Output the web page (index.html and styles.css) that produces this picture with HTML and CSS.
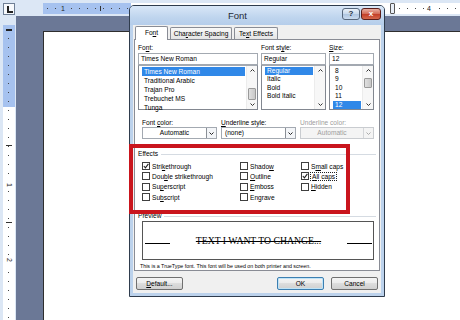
FILE: index.html
```html
<!DOCTYPE html>
<html lang="en">
<head>
    <meta charset="UTF-8">
    <meta name="viewport" content="width=device-width, initial-scale=1.0">
    <title>Font</title>
    <link rel="stylesheet" href="styles.css">
</head>
<body>
    <div class="word">
        <div class="corner"><div class="tab-kind"></div></div>

        <div class="hruler">
            <div class="hstrip">
                <span class="rnum rnum-1">1</span>
                <span class="rtick rtick-1"></span>
                <span class="indent"></span>
                <span class="rnum rnum-4">4</span>
            </div>
        </div>

        <div class="vruler">
            <div class="vstrip">
                <span class="vmark"></span>
                <span class="vtick vtick-1"></span>
                <span class="vnum vnum-1">1</span>
                <span class="vtick vtick-2"></span>
                <span class="vnum vnum-2">2</span>
            </div>
        </div>

        <div class="workspace">
            <div class="page"></div>
        </div>

        <div class="dialog">
            <div class="titlebar">
                <div class="title">Font</div>
                <div class="cap-btn help">?</div>
                <div class="cap-btn close">x</div>
            </div>

            <div class="client">
                <div class="tabs">
                    <div class="tab tab-font active">Fo<u>n</u>t</div>
                    <div class="tab tab-spacing">Cha<u>r</u>acter Spacing</div>
                    <div class="tab tab-effects">Te<u>x</u>t Effects</div>
                </div>

                <div class="panel">
                    <div class="pickers">
                        <div class="picker">
                            <div class="lbl">Fo<u>n</u>t:</div>
                            <div class="textbox">Times New Roman</div>
                            <div class="listbox">
                                <ul class="items items-font">
                                    <li class="sel">Times New Roman</li>
                                    <li>Traditional Arabic</li>
                                    <li>Trajan Pro</li>
                                    <li>Trebuchet MS</li>
                                    <li>Tunga</li>
                                </ul>
                                <div class="vscroll">
                                    <span class="arrow"><svg width="5" height="3" viewBox="0 0 5 3"><path d="M0.5 2.5 L2.5 0.5 L4.5 2.5" fill="none" stroke="#333"/></svg></span>
                                    <span class="track"><span class="thumb thumb-font"></span></span>
                                    <span class="arrow"><svg width="5" height="3" viewBox="0 0 5 3"><path d="M0.5 0.5 L2.5 2.5 L4.5 0.5" fill="none" stroke="#333"/></svg></span>
                                </div>
                            </div>
                        </div>

                        <div class="picker">
                            <div class="lbl">Font st<u>y</u>le:</div>
                            <div class="textbox">Regular</div>
                            <div class="listbox">
                                <ul class="items items-short">
                                    <li class="sel">Regular</li>
                                    <li>Italic</li>
                                    <li>Bold</li>
                                    <li>Bold Italic</li>
                                </ul>
                                <div class="vscroll">
                                    <span class="arrow"><svg width="5" height="3" viewBox="0 0 5 3"><path d="M0.5 2.5 L2.5 0.5 L4.5 2.5" fill="none" stroke="#333"/></svg></span>
                                    <span class="track"></span>
                                    <span class="arrow"><svg width="5" height="3" viewBox="0 0 5 3"><path d="M0.5 0.5 L2.5 2.5 L4.5 0.5" fill="none" stroke="#333"/></svg></span>
                                </div>
                            </div>
                        </div>

                        <div class="picker">
                            <div class="lbl"><u>S</u>ize:</div>
                            <div class="textbox">12</div>
                            <div class="listbox">
                                <ul class="items items-short">
                                    <li>8</li>
                                    <li>9</li>
                                    <li>10</li>
                                    <li>11</li>
                                    <li class="sel">12</li>
                                </ul>
                                <div class="vscroll">
                                    <span class="arrow"><svg width="5" height="3" viewBox="0 0 5 3"><path d="M0.5 2.5 L2.5 0.5 L4.5 2.5" fill="none" stroke="#333"/></svg></span>
                                    <span class="track"><span class="thumb thumb-size"></span></span>
                                    <span class="arrow"><svg width="5" height="3" viewBox="0 0 5 3"><path d="M0.5 0.5 L2.5 2.5 L4.5 0.5" fill="none" stroke="#333"/></svg></span>
                                </div>
                            </div>
                        </div>
                    </div>

                    <div class="combos">
                        <div class="picker">
                            <div class="lbl">Font <u>c</u>olor:</div>
                            <div class="combo">
                                <span class="combo-value center">Automatic</span>
                                <span class="combo-arrow"><svg width="5" height="3" viewBox="0 0 5 3"><path d="M0.5 0.5 L2.5 2.5 L4.5 0.5" fill="none" stroke="#222"/></svg></span>
                            </div>
                        </div>
                        <div class="picker">
                            <div class="lbl"><u>U</u>nderline style:</div>
                            <div class="combo">
                                <span class="combo-value">(none)</span>
                                <span class="combo-arrow"><svg width="5" height="3" viewBox="0 0 5 3"><path d="M0.5 0.5 L2.5 2.5 L4.5 0.5" fill="none" stroke="#222"/></svg></span>
                            </div>
                        </div>
                        <div class="picker off">
                            <div class="lbl">Underline color:</div>
                            <div class="combo">
                                <span class="combo-value center">Automatic</span>
                                <span class="combo-arrow"><svg width="5" height="3" viewBox="0 0 5 3"><path d="M0.5 0.5 L2.5 2.5 L4.5 0.5" fill="none" stroke="#aaa"/></svg></span>
                            </div>
                        </div>
                    </div>

                    <div class="group-title"><span>Effects</span></div>
                    <div class="effects">
                        <div class="chk"><span class="box"><svg width="6" height="6" viewBox="0 0 6 6"><path d="M0.8 3 L2.4 4.8 L5.4 0.8" fill="none" stroke="#222" stroke-width="1.1"/></svg></span><span>Stri<u>k</u>ethrough</span></div>
                        <div class="chk"><span class="box"></span><span>Dou<u>b</u>le strikethrough</span></div>
                        <div class="chk"><span class="box"></span><span>Su<u>p</u>erscript</span></div>
                        <div class="chk"><span class="box"></span><span>Su<u>b</u>script</span></div>

                        <div class="chk"><span class="box"></span><span>Shado<u>w</u></span></div>
                        <div class="chk"><span class="box"></span><span><u>O</u>utline</span></div>
                        <div class="chk"><span class="box"></span><span><u>E</u>mboss</span></div>
                        <div class="chk"><span class="box"></span><span>En<u>g</u>rave</span></div>

                        <div class="chk"><span class="box"></span><span>S<u>m</u>all caps</span></div>
                        <div class="chk"><span class="box"><svg width="6" height="6" viewBox="0 0 6 6"><path d="M0.8 3 L2.4 4.8 L5.4 0.8" fill="none" stroke="#222" stroke-width="1.1"/></svg></span><span class="focus"><u>A</u>ll caps</span></div>
                        <div class="chk"><span class="box"></span><span><u>H</u>idden</span></div>
                    </div>

                    <div class="group-title preview-title"><span>Preview</span></div>
                    <div class="preview">
                        <span class="pv-line"></span>
                        <span class="pv-text">TEXT I WANT TO CHANGE...</span>
                        <span class="pv-line pv-line-right"></span>
                    </div>
                    <p class="note">This is a TrueType font. This font will be used on both printer and screen.</p>
                </div>

                <div class="buttons">
                    <div class="btn"><u>D</u>efault...</div>
                    <div class="spacer"></div>
                    <div class="btn default">OK</div>
                    <div class="btn">Cancel</div>
                </div>
            </div>
        </div>

        <div class="callout"></div>
    </div>
</body>
</html>
```

FILE: styles.css
```css
* {
    box-sizing: border-box;
}

body {
    margin: 0;
    padding: 0;
    font-family: 'Liberation Sans', Arial, sans-serif;
}

u {
    text-decoration-thickness: 1px;
    text-underline-offset: 1px;
}

/* word window behind the dialog */

.word {
    position: relative;
    display: grid;
    grid-template-columns: 16px 1fr;
    grid-template-rows: 16px 1fr;
    width: 460px;
    height: 320px;
    overflow: hidden;
    background: #dce7f5;
}

.corner {
    padding: 3px 0 0 3px;
}

.tab-kind {
    position: relative;
    width: 12px;
    height: 12px;
    border: 1px solid #6f7f95;
    background: #f7f9fc;
}

.tab-kind::after {
    content: "";
    position: absolute;
    left: 3px;
    top: 2px;
    width: 4px;
    height: 5px;
    border-left: 2px solid #222;
    border-bottom: 2px solid #222;
}

.hruler {
    padding: 3px 0 0 27px;
}

.hstrip {
    position: relative;
    height: 11px;
    font-size: 7px;
    color: #222;
    background:
        linear-gradient(90deg, #444 0 1px, transparent 1px) 4px 5px / 8px 1px repeat-x,
        linear-gradient(90deg, #a6c2ef 0 88px, #fff 88px);
}

.rnum {
    position: absolute;
    top: 1px;
    line-height: 9px;
    padding: 0 1px;
}

.rnum-1 { left: 17px; background: #a6c2ef; }
.rnum-4 { left: 383px; background: #fff; }

.rtick {
    position: absolute;
    top: 3px;
    width: 1px;
    height: 5px;
    background: #333;
}

.rtick-1 { left: 57px; }

.indent {
    position: absolute;
    left: 347px;
    top: 0;
    width: 5px;
    height: 11px;
    border: 1px solid #555;
    border-radius: 1px;
    background: #e8eef7;
}

.vruler {
    padding: 9px 1px 0 3px;
}

.vstrip {
    position: relative;
    height: 100%;
    font-size: 7px;
    color: #222;
    background:
        linear-gradient(#444 0 1px, transparent 1px) 5px 4px / 1px 9px repeat-y,
        linear-gradient(#a6c2ef 0 82px, #fff 82px);
}

.vmark {
    position: absolute;
    left: 3px;
    top: 4px;
    width: 6px;
    height: 2px;
    background: #222;
}

.vtick {
    position: absolute;
    left: 3px;
    width: 6px;
    height: 1px;
    background: #333;
}

.vtick-1 { top: 120px; }
.vtick-2 { top: 197px; }

.vnum {
    position: absolute;
    left: 2px;
    width: 8px;
    line-height: 8px;
    text-align: center;
    background: #fff;
    transform: rotate(90deg);
}

.vnum-1 { top: 156px; }
.vnum-2 { top: 231px; }

.workspace {
    padding: 15px 0 0 27px;
    background: #6b7896;
}

.page {
    height: 100%;
    background: #fff;
    border-top: 1px solid #2e2e2e;
    border-left: 1px solid #2e2e2e;
}

/* font dialog */

.dialog {
    position: absolute;
    left: 129px;
    top: 5px;
    width: 256px;
    height: 292px;
    display: flex;
    flex-direction: column;
    border: 1px solid #2f3c4d;
    border-radius: 5px 5px 0 0;
    background: #bcd2ec;
    font-size: 6.6px;
    color: #000;
}

.titlebar {
    height: 19px;
    display: flex;
    align-items: flex-start;
    padding-right: 3px;
    border-radius: 4px 4px 0 0;
    background: linear-gradient(#d9e7f7, #bfd5ee 60%, #b5cdea);
}

.title {
    flex: 1;
    padding-left: 3px;
    text-align: center;
    font-size: 9.5px;
    line-height: 19px;
    color: #1e2a38;
}

.cap-btn {
    height: 12px;
    margin-top: 2px;
    border-radius: 3px;
    text-align: center;
    font-weight: bold;
    font-size: 8px;
    line-height: 10px;
}

.help {
    width: 18px;
    border: 1px solid #56667b;
    color: #1f2d3f;
    background: linear-gradient(#eaf1f9, #cbdbed 45%, #aec4df 50%, #c9dbef);
}

.close {
    width: 20px;
    margin-left: 1px;
    border: 1px solid #5b1e1a;
    color: #fff;
    background: linear-gradient(#eab0a3, #d4705c 45%, #c23c25 50%, #d4684c);
}

.client {
    flex: 1;
    margin: 0 3px 3px;
    background: #f0f0f0;
}

.tabs {
    height: 14px;
    display: flex;
    gap: 2px;
    padding: 2px 0 0 2px;
}

.tab {
    height: 12px;
    border: 1px solid #898c95;
    border-bottom: none;
    border-radius: 2px 2px 0 0;
    text-align: center;
    line-height: 11px;
    white-space: nowrap;
    background: linear-gradient(#f8f8f8, #e4e4e4);
}

.tab-font { width: 33px; }
.tab-spacing { width: 62px; }
.tab-effects { width: 44px; }

.tab.active {
    position: relative;
    z-index: 1;
    height: 14px;
    margin-top: -1px;
    background: #fff;
}

.panel {
    height: 232px;
    margin: 0 1px;
    padding: 4px 0 0 3px;
    border: 1px solid #898c95;
    background: #fff;
}

.lbl {
    height: 8px;
    line-height: 8px;
    white-space: nowrap;
}

.pickers {
    display: grid;
    grid-template-columns: 120px 65px 45px;
    column-gap: 3px;
}

.textbox {
    height: 12px;
    margin-top: 1px;
    padding: 0 2px;
    line-height: 10px;
    border: 1px solid #a3a9b1;
    background: #fff;
    white-space: nowrap;
}

.listbox {
    height: 45px;
    display: flex;
    border: 1px solid #828790;
    border-top-color: #a3a9b1;
}

.items {
    flex: 1;
    min-width: 0;
    margin: 0;
    padding: 1px 1px 0 3px;
    list-style: none;
}

.items li {
    padding-left: 2px;
    white-space: nowrap;
    overflow: hidden;
}

.items-font li {
    line-height: 9px;
}

.items-short li {
    line-height: 8.4px;
}

.items .sel {
    background: #3088e8;
    color: #fff;
}

.vscroll {
    width: 11px;
    display: flex;
    flex-direction: column;
    border-left: 1px solid #ececec;
    background: #f7f7f7;
}

.arrow {
    height: 9px;
    display: flex;
    align-items: center;
    justify-content: center;
}

.track {
    flex: 1;
    display: flex;
    justify-content: center;
}

.thumb {
    width: 8px;
    border: 1px solid #9a9a9a;
    border-radius: 1px;
    background: linear-gradient(90deg, #e0e0e0, #c8c8c8);
}

.thumb-font {
    height: 12px;
    margin-top: 13px;
}

.thumb-size {
    height: 10px;
    margin-top: 3px;
}

.combos {
    display: grid;
    grid-template-columns: 75px 75px 74px;
    column-gap: 4px;
    margin-top: 9px;
    padding-left: 4px;
}

.combo {
    height: 12px;
    display: flex;
    border: 1px solid #a3a9b1;
    background: #fff;
}

.combo-value {
    flex: 1;
    padding-left: 3px;
    line-height: 10px;
    white-space: nowrap;
}

.combo-value.center {
    padding-left: 0;
    text-align: center;
}

.combo-arrow {
    width: 10px;
    display: flex;
    align-items: center;
    justify-content: center;
    border-left: 1px solid #8a8f96;
    background: #f3f5f8;
}

.off {
    color: #9d9d9d;
}

.off .combo {
    border-color: #c9ccd0;
    background: #f4f4f4;
}

.off .combo-arrow {
    border-left-color: #d4d6d9;
    background: #f4f4f4;
}

.group-title {
    display: flex;
    align-items: center;
    margin-top: 11px;
    line-height: 8px;
}

.group-title::after {
    content: "";
    flex: 1;
    margin: 0 3px;
    border-top: 1px solid #d5dbe2;
}

.effects {
    display: grid;
    grid-template-columns: 98px 61px auto;
    grid-template-rows: repeat(4, 10.33px);
    grid-auto-flow: column;
    margin-top: 3px;
    padding-left: 4px;
}

.chk {
    display: flex;
    align-items: center;
    gap: 2px;
    white-space: nowrap;
}

.box {
    flex: none;
    width: 8px;
    height: 8px;
    display: flex;
    align-items: center;
    justify-content: center;
    border: 1px solid #3f3f3f;
    background: #fff;
}

.focus {
    outline: 1px dotted #222;
    outline-offset: 0;
    padding: 0 1px;
}

.preview-title {
    margin-top: 10px;
}

.preview {
    width: 232px;
    height: 39px;
    display: flex;
    align-items: center;
    margin: 1px 0 0 4px;
    border: 1px solid #555;
    background: #fff;
}

.pv-line {
    width: 25px;
    margin: 6px 0 0 2px;
    border-top: 1px solid #000;
}

.pv-line-right {
    margin: 6px 1px 0 0;
}

.pv-text {
    flex: 1;
    text-align: center;
    font-family: 'Liberation Serif', 'Times New Roman', serif;
    font-size: 9.7px;
    text-decoration: line-through;
    white-space: nowrap;
}

.note {
    margin: 2px 0 0;
    padding-left: 2px;
    font-size: 5.3px;
    line-height: 8px;
    white-space: nowrap;
}

.buttons {
    display: flex;
    gap: 7px;
    margin-top: 6px;
    padding: 0 3px;
}

.spacer {
    flex: 1;
}

.btn {
    width: 47px;
    height: 13px;
    border: 1px solid #707070;
    border-radius: 2px;
    text-align: center;
    line-height: 11px;
    background: linear-gradient(#f4f4f4, #ebebeb 50%, #dddddd 50%, #d0d0d0);
}

.btn.default {
    border-color: #3c7fb1;
    box-shadow: inset 0 0 0 1px #bfe3f7;
}

/* red highlight drawn over the screenshot */

.callout {
    position: absolute;
    left: 129px;
    top: 144px;
    width: 221px;
    height: 70px;
    border: 4px solid #c9151d;
}
```
